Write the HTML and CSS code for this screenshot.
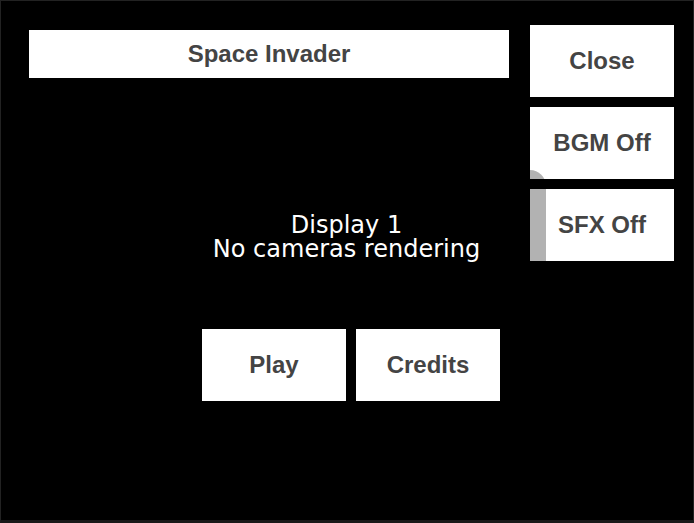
FILE: index.html
```html
<!DOCTYPE html>
<html lang="en">
<head>
<meta charset="utf-8">
<title>Space Invader</title>
<link rel="stylesheet" href="styles.css">
</head>
<body>
<main class="display">
  <section class="stage">
    <h1 class="title">Space Invader</h1>
    <p class="message">Display 1<br>No cameras rendering</p>
    <div class="options">
      <button class="button" type="button">Close</button>
      <button class="button" type="button">BGM Off</button>
      <button class="button" type="button">SFX Off</button>
      <span class="shade"></span>
    </div>
  </section>
  <nav class="menu">
    <button class="button" type="button">Play</button>
    <button class="button" type="button">Credits</button>
  </nav>
</main>
</body>
</html>
```

FILE: styles.css
```css
* {
  box-sizing: border-box;
}

body {
  margin: 0;
  background: #000;
}

.display {
  min-height: 100vh;
  border: 1px solid #222;
  border-bottom: 3px solid #191919;
  background: #000;
}

.stage {
  display: grid;
  grid-template-columns: 1fr 144px;
  column-gap: 21px;
  padding: 24px 19px 0 28px;
}

.title,
.button {
  color: #444;
  background: #fff;
  font: bold 24px/32px "Liberation Sans", Arial, sans-serif;
  text-align: center;
}

.title {
  grid-area: 1 / 1;
  align-self: start;
  margin: 5px 0 0;
  padding: 8px;
}

.message {
  grid-area: 1 / 1 / 2 / 3;
  align-self: end;
  margin: 0;
  padding-right: 10px;
  color: #fff;
  font: 24px/24px "DejaVu Sans", Verdana, sans-serif;
  text-align: center;
}

.options {
  grid-area: 1 / 2;
  position: relative;
  display: flex;
  flex-direction: column;
  gap: 10px;
}

.button {
  width: 144px;
  height: 72px;
  padding: 0;
  border: 0;
  cursor: pointer;
}

/* Translucent joystick track lying over the option buttons */
.shade {
  position: absolute;
  top: 145px;
  bottom: 0;
  left: -16px;
  width: 32px;
  border-radius: 16px 16px 0 0;
  background: rgba(0, 0, 0, 0.3);
  pointer-events: none;
}

.menu {
  display: flex;
  justify-content: center;
  gap: 10px;
  padding: 68px 0 0 8px;
}
```
